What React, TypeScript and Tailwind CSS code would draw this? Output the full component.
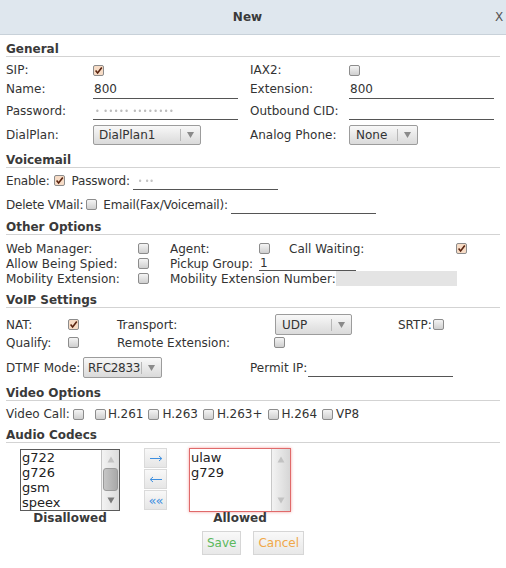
import React from "react";

function Cb({ checked = false, className = "" }: { checked?: boolean; className?: string }) {
  return (
    <span
      className={`inline-flex shrink-0 w-[11px] h-[11px] items-center justify-center border border-[#8c8c8c] rounded-[2px] ${
        checked ? "bg-[#f7dcc6]" : "bg-linear-to-b from-[#f4f4f4] to-[#cfcfcf]"
      } ${className}`}
    >
      {checked && (
        <svg width="9" height="9" viewBox="0 0 9 9">
          <path d="M1.6 4.6 L3.6 7 L7.8 1.6" fill="none" stroke="#5a2410" strokeWidth="1.6" />
        </svg>
      )}
    </span>
  );
}

function Tri({ up = false, color = "#777" }: { up?: boolean; color?: string }) {
  return (
    <svg width="8" height="7" viewBox="0 0 8 7">
      <polygon points={up ? "4,0.5 7.5,6.5 0.5,6.5" : "0.5,0.5 7.5,0.5 4,6.5"} fill={color} />
    </svg>
  );
}

function Sel({ value, className = "" }: { value: string; className?: string }) {
  return (
    <div
      className={`flex items-center border border-[#9c9c9c] rounded-[2px] bg-linear-to-b from-[#f8f8f8] to-[#dadada] ${className}`}
    >
      <span className="flex-1 whitespace-nowrap">{value}</span>
      <span className="w-px h-[12px] bg-[#b8b8b8]" />
      <span className="w-[19px] flex justify-center">
        <svg width="7" height="6" viewBox="0 0 7 6">
          <polygon points="0,0 7,0 3.5,6" fill="#8a8a8a" />
        </svg>
      </span>
    </div>
  );
}

function Heading({ children, className = "" }: { children: React.ReactNode; className?: string }) {
  return (
    <div className={`h-[16px] leading-[15px] pt-[1px] font-bold text-[#3a3a3a] border-b border-[#d3d3d3] ${className}`}>
      {children}
    </div>
  );
}

function Line({ children, className = "" }: { children?: React.ReactNode; className?: string }) {
  return <div className={`border-b border-[#555] whitespace-nowrap ${className}`}>{children}</div>;
}

function ArrowBtn({ children }: { children: React.ReactNode }) {
  return (
    <div className="h-[20px] w-[23px] flex items-center justify-center border border-[#dadada] bg-linear-to-b from-[#f8f8f8] to-[#e6e6e6]">
      {children}
    </div>
  );
}

export default function App() {
  return (
    <div className="w-[506px] h-[568px] bg-white font-['DejaVu_Sans',sans-serif] text-[12px] leading-[14px] text-[#333]">
      {/* title bar */}
      <div className="h-[35px] flex items-center bg-[#dfe7ee] border-b border-[#c8d1d9]">
        <span className="flex-1 text-center font-bold text-[#3a3a3a]">New</span>
        <span className="w-[10px] mr-[1px] text-[#555]">X</span>
      </div>

      <div className="px-[6px]">
        {/* General */}
        <Heading className="mt-[6px]">General</Heading>
        <div className="grid grid-cols-[87px_157px_99px_1fr] grid-rows-[18px_20px_23px_26px] mt-[4px] items-center">
          <span>SIP:</span>
          <Cb checked />
          <span>IAX2:</span>
          <Cb />

          <span>Name:</span>
          <Line className="w-[145px] h-[19px] leading-[18px] pl-[1px]">800</Line>
          <span>Extension:</span>
          <Line className="w-[145px] h-[19px] leading-[18px] pl-[1px]">800</Line>

          <span>Password:</span>
          <Line className="w-[145px] h-[19px] leading-[18px] pl-[2px]">
            <span className="text-[8px] text-[#bdbdbd] blur-[0.6px] tracking-[0.5px]">• ••••• ••••••••</span>
          </Line>
          <span>Outbound CID:</span>
          <Line className="w-[145px] h-[19px]" />

          <span>DialPlan:</span>
          <Sel value="DialPlan1" className="w-[108px] h-[20px] pl-[5px]" />
          <span>Analog Phone:</span>
          <Sel value="None" className="w-[69px] h-[20px] pl-[6px]" />
        </div>

        {/* Voicemail */}
        <Heading className="mt-[4px]">Voicemail</Heading>
        <div className="flex items-center h-[22px] mt-[2px] tracking-[-0.2px]">
          <span>Enable:</span>
          <Cb checked className="ml-[4px] -mt-[1px]" />
          <span className="ml-[7px]">Password:</span>
          <Line className="ml-[3px] w-[145px] h-[18px] leading-[17px] pl-[5px]">
            <span className="text-[8px] text-[#c4c4c4] blur-[0.6px]">• ••</span>
          </Line>
        </div>
        <div className="flex items-center h-[22px] mt-[2px] tracking-[-0.2px]">
          <span>Delete VMail:</span>
          <Cb className="ml-[3px] -mt-[1px]" />
          <span className="ml-[6px]">Email(Fax/Voicemail):</span>
          <Line className="ml-[3px] w-[145px] h-[18px]" />
        </div>

        {/* Other Options */}
        <Heading className="mt-[3px]">Other Options</Heading>
        <div className="flex items-center h-[15px] mt-[6px]">
          <span className="w-[132px]">Web Manager:</span>
          <span className="w-[32px] flex"><Cb /></span>
          <span className="w-[89px]">Agent:</span>
          <span className="w-[30px] flex"><Cb /></span>
          <span className="w-[167px]">Call Waiting:</span>
          <Cb checked />
        </div>
        <div className="flex items-center h-[15px]">
          <span className="w-[132px]">Allow Being Spied:</span>
          <span className="w-[32px] flex"><Cb /></span>
          <span className="w-[89px]">Pickup Group:</span>
          <Line className="w-[97px] h-[15px] leading-[14px] pl-[1px]">1</Line>
        </div>
        <div className="flex items-center h-[15px]">
          <span className="w-[132px]">Mobility Extension:</span>
          <span className="w-[32px] flex"><Cb /></span>
          <span className="whitespace-nowrap">Mobility Extension Number:</span>
          <div className="w-[121px] h-[15px] bg-[#e4e4e4]" />
        </div>

        {/* VoIP Settings */}
        <Heading className="mt-[6px]">VoIP Settings</Heading>
        <div className="flex items-center h-[21px] mt-[6px]">
          <span className="w-[62px]">NAT:</span>
          <span className="w-[49px] flex"><Cb checked /></span>
          <span className="w-[158px]">Transport:</span>
          <Sel value="UDP" className="w-[77px] h-[21px] pl-[6px]" />
          <span className="w-[46px]" />
          <span>SRTP:</span>
          <Cb className="ml-[1px]" />
        </div>
        <div className="flex items-center h-[15px]">
          <span className="w-[62px]">Qualify:</span>
          <span className="w-[49px] flex"><Cb /></span>
          <span className="w-[157px]">Remote Extension:</span>
          <Cb />
        </div>
        <div className="flex items-center h-[23px] mt-[6px]">
          <span className="w-[77px]">DTMF Mode:</span>
          <Sel value="RFC2833" className="w-[79px] h-[21px] pl-[4px] tracking-[-0.3px]" />
          <span className="w-[88px]" />
          <span className="w-[58px]">Permit IP:</span>
          <Line className="w-[145px] h-[18px]" />
        </div>

        {/* Video Options */}
        <Heading className="mt-[6px]">Video Options</Heading>
        <div className="flex items-center h-[16px] mt-[5px]">
          <span>Video Call:</span>
          <Cb className="ml-[3px]" />
          <Cb className="ml-[11px]" />
          <span className="ml-[2px]">H.261</span>
          <Cb className="ml-[5px]" />
          <span className="ml-[3px]">H.263</span>
          <Cb className="ml-[5px]" />
          <span className="ml-[3px]">H.263+</span>
          <Cb className="ml-[5px]" />
          <span className="ml-[3px]">H.264</span>
          <Cb className="ml-[5px]" />
          <span className="ml-[3px]">VP8</span>
        </div>

        {/* Audio Codecs */}
        <Heading className="mt-[5px]">Audio Codecs</Heading>
        <div className="flex items-start ml-[14px] mt-[5px]">
          <div className="w-[100px] mt-[1px] flex flex-col">
            <div className="h-[62px] flex border border-[#5a5a5a] bg-white">
              <div className="flex-1 text-[13px] leading-[15px] pl-[1px] text-[#222] overflow-hidden">
                <div>g722</div>
                <div>g726</div>
                <div>gsm</div>
                <div>speex</div>
              </div>
              <div className="w-[18px] flex flex-col bg-linear-to-r from-[#f3f3f3] to-[#dcdcdc] border-l border-[#c4c4c4]">
                <div className="h-[18px] flex items-center justify-center"><Tri up color="#c2c2c2" /></div>
                <div className="h-[23px] mx-[1px] rounded-[3px] border border-[#9a9a9a] bg-linear-to-r from-[#c6c6c6] to-[#a9a9a9]" />
                <div className="flex-1 flex items-center justify-center"><Tri color="#7a7a7a" /></div>
              </div>
            </div>
            <div className="text-center font-bold text-[#3a3a3a] leading-[14px]">Disallowed</div>
          </div>

          <div className="ml-[24px] flex flex-col gap-[1px]">
            <ArrowBtn>
              <svg width="14" height="7" viewBox="0 0 14 7">
                <path d="M1 3.5 H12.5 M10 1 L12.8 3.5 L10 6" fill="none" stroke="#3d8fe0" strokeWidth="1" />
              </svg>
            </ArrowBtn>
            <ArrowBtn>
              <svg width="14" height="7" viewBox="0 0 14 7">
                <path d="M13 3.5 H1.5 M4 1 L1.2 3.5 L4 6" fill="none" stroke="#3d8fe0" strokeWidth="1" />
              </svg>
            </ArrowBtn>
            <ArrowBtn>
              <span className="text-[13px] leading-[13px] text-[#3d8fe0] tracking-[-1px]">««</span>
            </ArrowBtn>
          </div>

          <div className="ml-[22px] w-[102px] flex flex-col">
            <div className="h-[64px] flex border border-[#e06a6a] shadow-[0_0_3px_#f3a0a0] bg-white">
              <div className="flex-1 text-[13px] leading-[15px] pl-[1px] pt-[1px] text-[#222]">
                <div>ulaw</div>
                <div>g729</div>
              </div>
              <div className="w-[19px] flex flex-col justify-between bg-linear-to-r from-[#f3f3f3] to-[#d6d6d6] border-l border-[#c8c8c8]">
                <div className="h-[18px] flex items-center justify-center mt-[1px]"><Tri up color="#c2c2c2" /></div>
                <div className="h-[18px] flex items-center justify-center mb-[2px]"><Tri color="#c2c2c2" /></div>
              </div>
            </div>
            <div className="text-center font-bold text-[#3a3a3a] leading-[14px] -mt-[1px]">Allowed</div>
          </div>
        </div>

        <div className="flex justify-center gap-[12px] mt-[6px]">
          <div className="h-[24px] px-[4px] flex items-center border border-[#d6d6d6] bg-linear-to-b from-[#f9f9f9] to-[#e8e8e8] text-[#5cb85c]">
            Save
          </div>
          <div className="h-[24px] px-[4px] flex items-center border border-[#d6d6d6] bg-linear-to-b from-[#f9f9f9] to-[#e8e8e8] text-[#f0a848]">
            Cancel
          </div>
        </div>
      </div>
    </div>
  );
}
